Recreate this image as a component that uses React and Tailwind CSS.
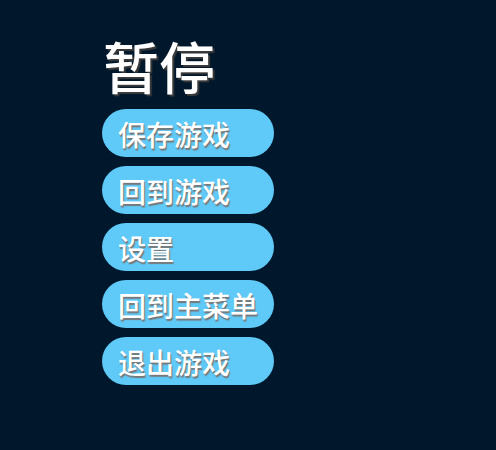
import React from "react";

const items = ["保存游戏", "回到游戏", "设置", "回到主菜单", "退出游戏"];

export default function App() {
  return (
    <div
      className="w-[496px] h-[450px] bg-[#01182c] pl-[102px] pt-[28px]"
      style={{ fontFamily: '"Noto Sans CJK SC", "Noto Sans", sans-serif' }}
    >
      <h1 className="text-[56px] leading-[74px] font-medium text-white pl-[1px] [text-shadow:2px_2px_1px_#3a3a3a]">
        暂停
      </h1>
      <div className="flex flex-col gap-[9px] mt-[7px]">
        {items.map((item) => (
          <button
            key={item}
            className="w-[172px] h-[48px] rounded-full bg-[#5fc9f8] text-left pl-[16px] pt-[1px] text-[28px] leading-none font-medium text-white [text-shadow:1px_2px_1px_#777]"
          >
            {item}
          </button>
        ))}
      </div>
    </div>
  );
}
